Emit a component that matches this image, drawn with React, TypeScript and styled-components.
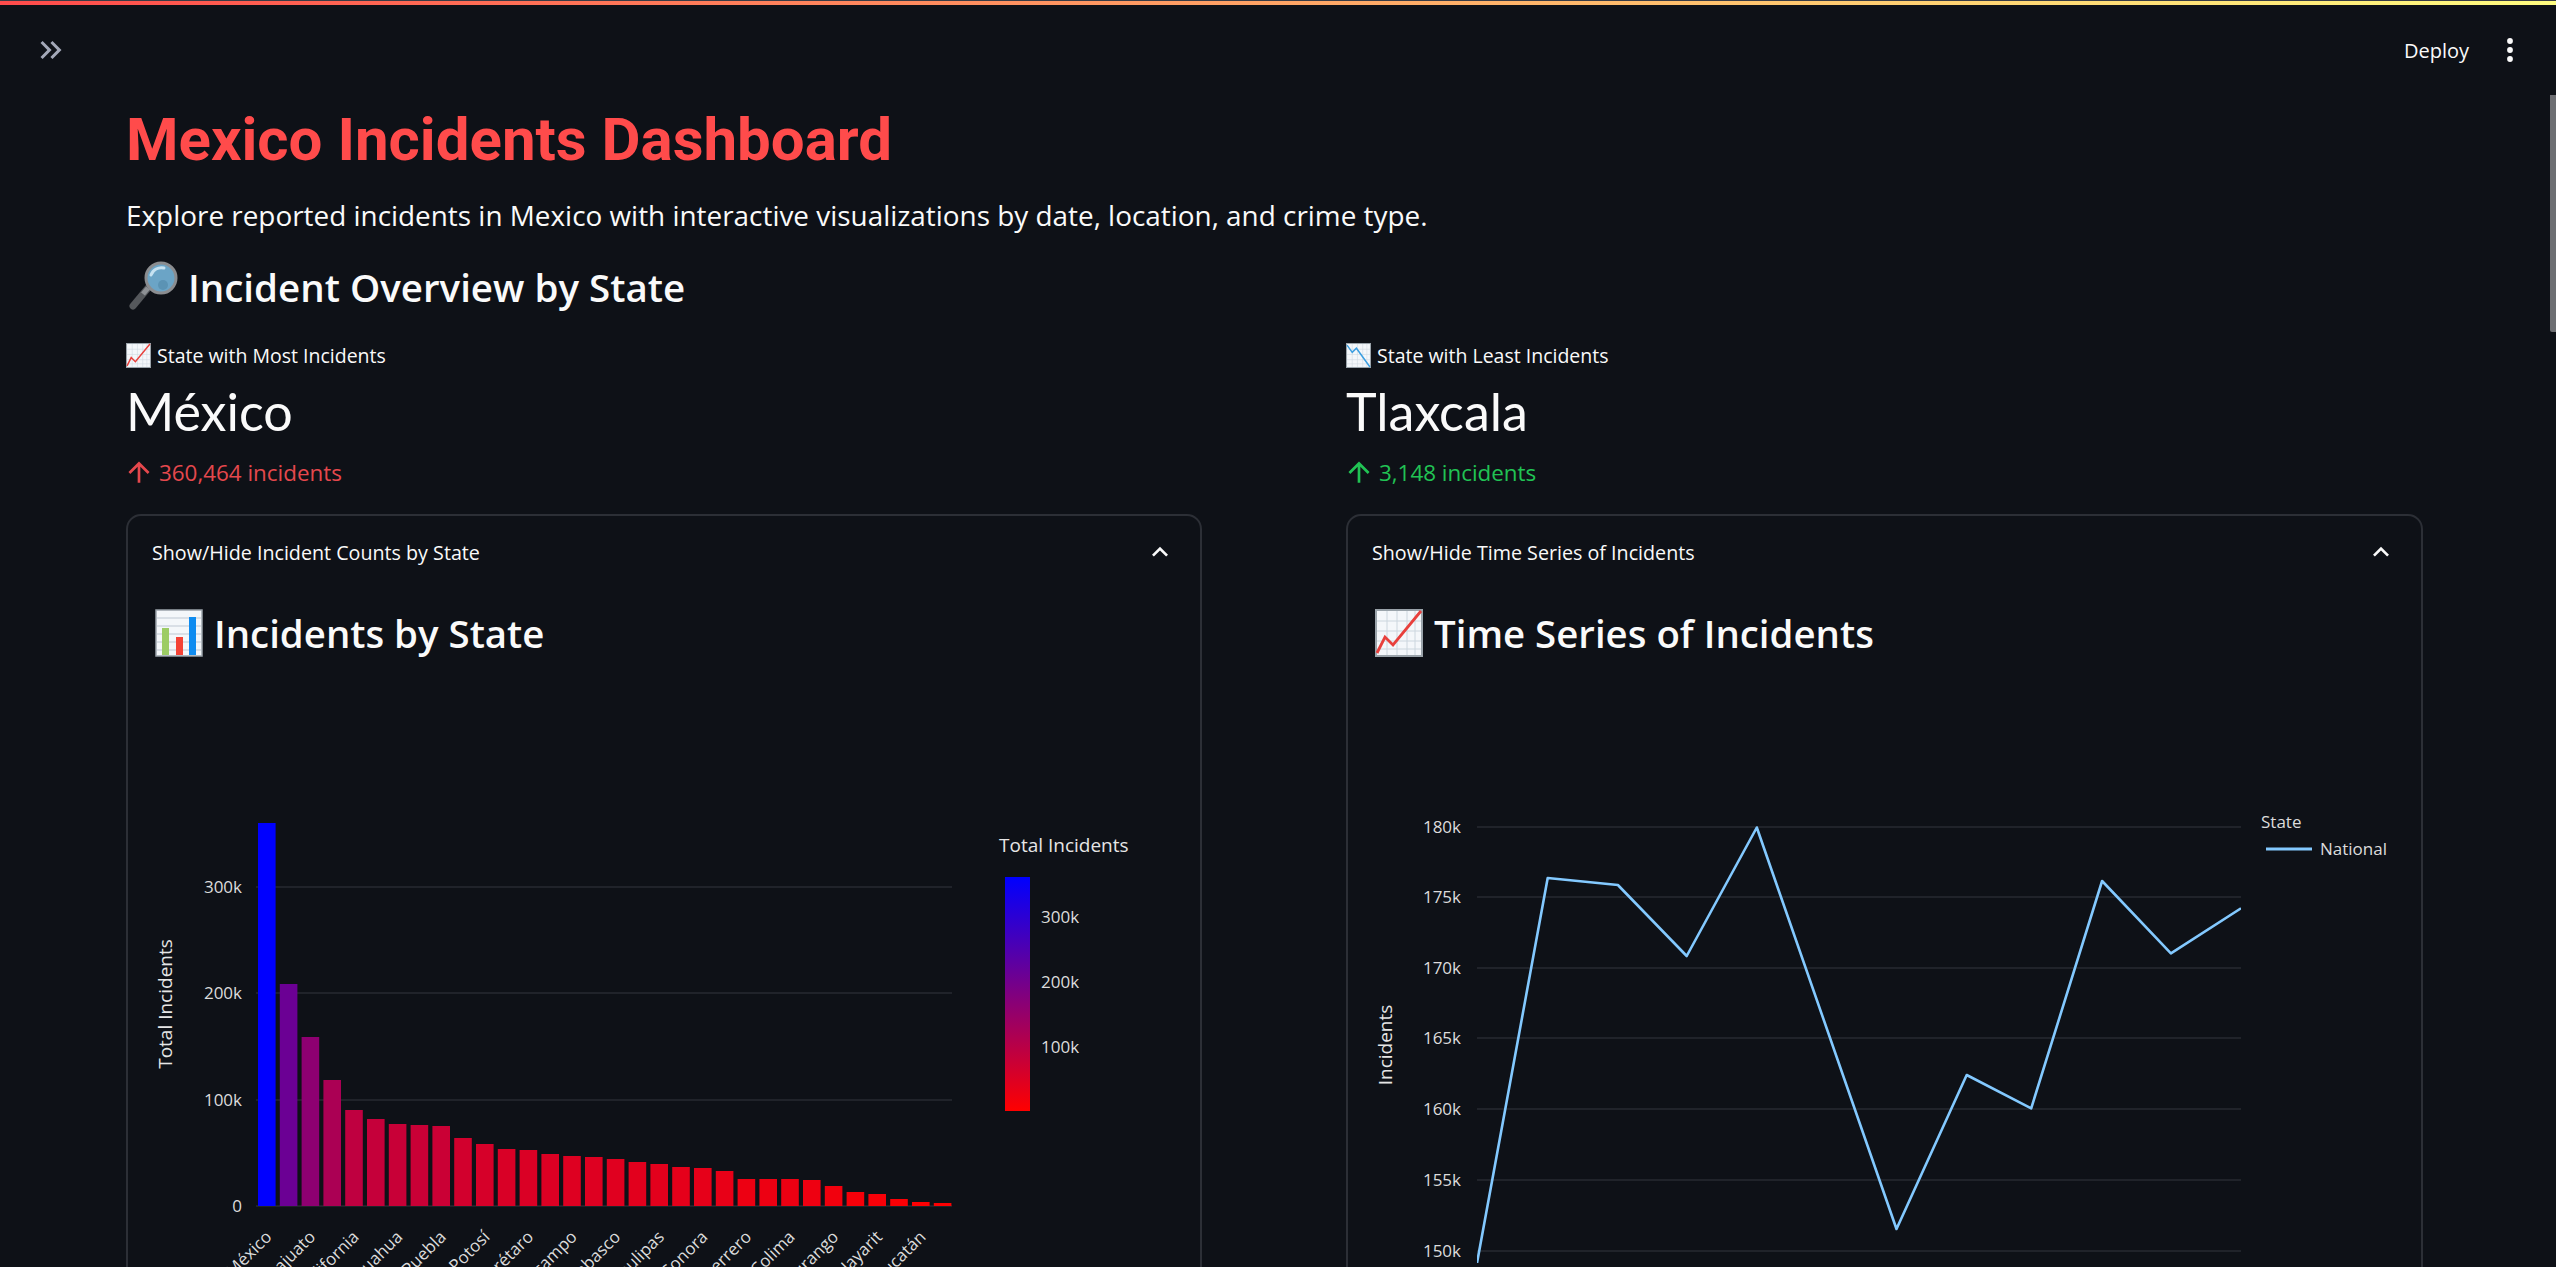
import React from 'react'
import styled, { createGlobalStyle } from 'styled-components'

const FONT = '"Open Sans", "Noto Sans", sans-serif'

const GlobalStyle = createGlobalStyle`
  html, body { margin: 0; padding: 0; background: #0e1117; }
  body { overflow: hidden; font-family: ${FONT}; color: #fafafa; }
`

// chart data, in page pixels read off the reference
const BAR_TOPS = [
  823, 984, 1037, 1080, 1110, 1119, 1124, 1125, 1126, 1138, 1144, 1149, 1150, 1154, 1156, 1157,
  1159, 1162, 1164, 1167, 1168, 1171, 1179, 1179, 1179, 1180, 1186, 1192, 1194, 1199, 1202, 1203
]
const BAR_LEFT = 258
const BAR_PITCH = 21.8
const BAR_WIDTH = 17.6
const BASELINE = 1206
const STATE_LABELS = [
  'México', 'Guanajuato', 'Baja California', 'Chihuahua', 'Puebla', 'San Luis Potosí', 'Querétaro',
  'Michoacán de Ocampo', 'Tabasco', 'Tamaulipas', 'Sonora', 'Guerrero', 'Colima', 'Durango',
  'Nayarit', 'Yucatán'
]
const BAR_GRID = [
  { y: 1100, label: '100k' },
  { y: 993, label: '200k' },
  { y: 887, label: '300k' }
]
const SCALE_TICKS = [
  { y: 917, label: '300k' },
  { y: 982, label: '200k' },
  { y: 1047, label: '100k' }
]
const LINE_GRID = [
  { y: 827, label: '180k' },
  { y: 897, label: '175k' },
  { y: 968, label: '170k' },
  { y: 1038, label: '165k' },
  { y: 1109, label: '160k' },
  { y: 1180, label: '155k' },
  { y: 1251, label: '150k' }
]
const LINE_POINTS =
  '1477,1263 1547.7,878 1617.9,885 1686.7,956 1756.8,827.5 1896.5,1229 1966.7,1075 2031.2,1108.3 2102.1,881 2170.9,953.3 2241,908.3'

const barColor = (top: number) => {
  const t = (BASELINE - top) / (BASELINE - BAR_TOPS[0])
  return `rgb(${Math.round(255 * (1 - t))},0,${Math.round(255 * t)})`
}

const MagnifierEmoji = () => (
  <EmojiSvg $size={52} viewBox="0 0 52 52">
    <path d="M22 27 L7 45" stroke="#55585c" strokeWidth="7" strokeLinecap="round" />
    <path d="M22 27 L17 33" stroke="#8d9094" strokeWidth="5" />
    <circle cx="35" cy="17" r="15" fill="#6ba4c6" stroke="#8b8d90" strokeWidth="3" />
    <path d="M25 14 A11 11 0 0 1 38 7" stroke="#c7e2f1" strokeWidth="3" fill="none" strokeLinecap="round" />
    <circle cx="37" cy="24" r="5" fill="#5b93b4" />
  </EmojiSvg>
)

const GraphPaper = () => (
  <>
    <rect x="0.5" y="0.5" width="23" height="23" fill="#f4f7fa" stroke="#9aa3aa" />
    <path
      d="M1 6H23M1 11H23M1 16H23M1 20H23M6 1V23M11 1V23M16 1V23M20 1V23"
      stroke="#ccd6de"
      strokeWidth="0.5"
    />
  </>
)

const ChartUpEmoji = ({ size }: { size: number }) => (
  <EmojiSvg $size={size} viewBox="0 0 24 24">
    <GraphPaper />
    <path d="M1 22 L5 14 L9 18 L23 1" fill="none" stroke="#e8403c" strokeWidth="1.4" />
  </EmojiSvg>
)

const ChartDownEmoji = ({ size }: { size: number }) => (
  <EmojiSvg $size={size} viewBox="0 0 24 24">
    <GraphPaper />
    <path d="M1 2 L6 9 L10 5 L23 23" fill="none" stroke="#3b9ee0" strokeWidth="1.4" />
  </EmojiSvg>
)

const BarsEmoji = ({ size }: { size: number }) => (
  <EmojiSvg $size={size} viewBox="0 0 48 48">
    <rect x="1" y="1" width="46" height="46" fill="#f4f7fa" stroke="#9aa3aa" strokeWidth="1.5" />
    <path d="M2 9H46M2 17H46M2 25H46M2 33H46M2 41H46" stroke="#cfd8df" strokeWidth="1.5" />
    <rect x="7" y="19" width="7" height="27" fill="#9ccc65" />
    <rect x="21" y="28" width="7" height="18" fill="#f44336" />
    <rect x="34" y="8" width="7" height="38" fill="#0f8cf0" />
  </EmojiSvg>
)

const ArrowUp = ({ color }: { color: string }) => (
  <DeltaArrow viewBox="0 0 24 24" fill={color}>
    <path d="M13 20h-2V8l-5.5 5.5-1.42-1.42L12 4.16l7.92 7.92-1.42 1.42L13 8z" />
  </DeltaArrow>
)

const IncidentsByState = () => (
  <ChartSvg width={1024} height={700} viewBox="152 678 1024 700">
    <defs>
      <linearGradient id="scale" x1="0" y1="0" x2="0" y2="1">
        <stop offset="0" stopColor="#0000ff" />
        <stop offset="1" stopColor="#ff0000" />
      </linearGradient>
    </defs>
    <GridLine x1={256} x2={952} y1={BASELINE} y2={BASELINE} />
    {BAR_GRID.map(g => (
      <g key={g.label}>
        <GridLine x1={256} x2={952} y1={g.y} y2={g.y} />
        <TickLabel x={242} y={g.y + 6} textAnchor="end">{g.label}</TickLabel>
      </g>
    ))}
    <TickLabel x={242} y={BASELINE + 6} textAnchor="end">0</TickLabel>
    {BAR_TOPS.map((top, i) => (
      <rect
        key={i}
        x={BAR_LEFT + i * BAR_PITCH}
        y={top}
        width={BAR_WIDTH}
        height={BASELINE - top}
        fill={barColor(top)}
      />
    ))}
    {STATE_LABELS.map((name, i) => {
      const x = BAR_LEFT + BAR_WIDTH / 2 + i * 2 * BAR_PITCH + 6
      return (
        <TickLabel key={name} x={x} y={1238} textAnchor="end" transform={`rotate(-45 ${x} 1238)`}>
          {name}
        </TickLabel>
      )
    })}
    <AxisTitle x={172} y={1004} textAnchor="middle" transform="rotate(-90 172 1004)">
      Total Incidents
    </AxisTitle>
    <AxisTitle x={999} y={852}>Total Incidents</AxisTitle>
    <rect x={1005} y={877} width={25} height={234} fill="url(#scale)" />
    {SCALE_TICKS.map(t => (
      <TickLabel key={t.label} x={1041} y={t.y + 6}>{t.label}</TickLabel>
    ))}
  </ChartSvg>
)

const IncidentsOverTime = () => (
  <ChartSvg width={1025} height={700} viewBox="1372 678 1025 700">
    <defs>
      <clipPath id="plot">
        <rect x={1477} y={800} width={764} height={463} />
      </clipPath>
    </defs>
    {LINE_GRID.map(g => (
      <g key={g.label}>
        <GridLine x1={1477} x2={2241} y1={g.y} y2={g.y} />
        <TickLabel x={1461} y={g.y + 6} textAnchor="end">{g.label}</TickLabel>
      </g>
    ))}
    <AxisTitle x={1392} y={1045} textAnchor="middle" transform="rotate(-90 1392 1045)">
      Incidents
    </AxisTitle>
    <polyline
      points={LINE_POINTS}
      fill="none"
      stroke="#83c9ff"
      strokeWidth="2.6"
      strokeLinejoin="round"
      clipPath="url(#plot)"
    />
    <TickLabel x={2261} y={828}>State</TickLabel>
    <line x1={2266} x2={2312} y1={849} y2={849} stroke="#83c9ff" strokeWidth="3" />
    <TickLabel x={2320} y={855}>National</TickLabel>
  </ChartSvg>
)

export default function App() {
  return (
    <Shell>
      <GlobalStyle />
      <TopStripe />
      <Toolbar>
        <svg width="36" height="36" viewBox="0 0 24 24" fill="#a3a8b8">
          <path d="M6.41 6 5 7.41 9.58 12 5 16.59 6.41 18l6-6z" />
          <path d="M13 6l-1.41 1.41L16.17 12l-4.58 4.59L13 18l6-6z" />
        </svg>
        <ToolbarActions>
          <DeployLabel>Deploy</DeployLabel>
          <svg width="24" height="36" viewBox="0 0 24 36" fill="#fafafa">
            <circle cx="12" cy="9" r="2.9" />
            <circle cx="12" cy="18" r="2.9" />
            <circle cx="12" cy="27" r="2.9" />
          </svg>
        </ToolbarActions>
      </Toolbar>
      <Main>
        <Title>Mexico Incidents Dashboard</Title>
        <Subtitle>Explore reported incidents in Mexico with interactive visualizations by date, location, and crime type.</Subtitle>
        <SectionHeading>
          <MagnifierEmoji />
          Incident Overview by State
        </SectionHeading>
        <Columns>
          <Column>
            <MetricLabel>
              <ChartUpEmoji size={25} />
              State with Most Incidents
            </MetricLabel>
            <MetricValue>México</MetricValue>
            <MetricDelta $color="#e5484d">
              <ArrowUp color="#e5484d" />
              360,464 incidents
            </MetricDelta>
            <Panel>
              <PanelHeader>
                Show/Hide Incident Counts by State
                <Chevron />
              </PanelHeader>
              <PanelHeading>
                <BarsEmoji size={48} />
                Incidents by State
              </PanelHeading>
              <IncidentsByState />
            </Panel>
          </Column>
          <Column>
            <MetricLabel>
              <ChartDownEmoji size={25} />
              State with Least Incidents
            </MetricLabel>
            <MetricValue>Tlaxcala</MetricValue>
            <MetricDelta $color="#21c354">
              <ArrowUp color="#21c354" />
              3,148 incidents
            </MetricDelta>
            <Panel>
              <PanelHeader>
                Show/Hide Time Series of Incidents
                <Chevron />
              </PanelHeader>
              <PanelHeading>
                <ChartUpEmoji size={48} />
                Time Series of Incidents
              </PanelHeading>
              <IncidentsOverTime />
            </Panel>
          </Column>
        </Columns>
      </Main>
      <ScrollThumb />
    </Shell>
  )
}

const Chevron = () => (
  <svg width="32" height="32" viewBox="0 0 24 24" fill="#fafafa">
    <path d="M12 8l-6 6 1.41 1.41L12 10.83l4.59 4.58L18 14z" />
  </svg>
)

const Shell = styled.div`
  position: relative;
  height: 100vh;
  overflow: hidden;
  background: #0e1117;
`

const TopStripe = styled.div`
  height: 4px;
  border-top: 1px solid #3a3d46;
  background: linear-gradient(90deg, #ff4b4b, #fffd80);
`

const Toolbar = styled.header`
  display: flex;
  justify-content: space-between;
  align-items: center;
  height: 90px;
  padding: 0 34px 0 33px;
`

const ToolbarActions = styled.div`
  display: flex;
  align-items: center;
  gap: 29px;
`

const DeployLabel = styled.span`
  font-size: 20px;
`

const Main = styled.main`
  padding: 0 133px 0 126px;
`

const Title = styled.h1`
  margin: 0;
  height: 90px;
  line-height: 90px;
  font-family: Roboto, sans-serif;
  font-size: 60px;
  font-weight: 700;
  color: #ff4b4b;
  white-space: nowrap;
`

const Subtitle = styled.p`
  margin: 0;
  height: 60px;
  line-height: 60px;
  font-size: 27.9px;
`

const SectionHeading = styled.h2`
  display: flex;
  align-items: center;
  gap: 10px;
  margin: 0;
  height: 84px;
  font-size: 38.5px;
  font-weight: 600;
`

const Columns = styled.div`
  display: grid;
  grid-template-columns: 1076px 1077px;
  column-gap: 144px;
  margin-top: 12px;
`

const Column = styled.section`
  display: flex;
  flex-direction: column;
`

const MetricLabel = styled.div`
  display: flex;
  align-items: center;
  gap: 6px;
  height: 28px;
  font-size: 19.5px;
`

const MetricValue = styled.div`
  height: 70px;
  margin-top: 7px;
  line-height: 70px;
  font-family: Lato, sans-serif;
  font-size: 52px;
`

const MetricDelta = styled.div<{ $color: string }>`
  display: flex;
  align-items: center;
  gap: 4px;
  height: 32px;
  margin-top: 10px;
  font-size: 22.4px;
  color: ${p => p.$color};
`

const DeltaArrow = styled.svg`
  flex: none;
  width: 32px;
  height: 32px;
  margin-left: -3px;
`

const Panel = styled.div`
  box-sizing: border-box;
  height: 900px;
  margin-top: 26px;
  padding: 0 24px;
  border: 2px solid #2c2f36;
  border-radius: 15px;
`

const PanelHeader = styled.div`
  display: flex;
  justify-content: space-between;
  align-items: center;
  height: 72px;
  font-size: 19.7px;
`

const PanelHeading = styled.h3`
  display: flex;
  align-items: center;
  gap: 11px;
  margin: 0;
  height: 90px;
  padding-left: 3px;
  font-size: 38.4px;
  font-weight: 600;
`

const EmojiSvg = styled.svg<{ $size: number }>`
  flex: none;
  width: ${p => p.$size}px;
  height: ${p => p.$size}px;
`

const ChartSvg = styled.svg`
  display: block;
`

const GridLine = styled.line`
  stroke: #33363e;
  stroke-width: 1.2;
`

const TickLabel = styled.text`
  font-family: ${FONT};
  font-size: 17px;
  fill: #dcdcdc;
`

const AxisTitle = styled.text`
  font-family: ${FONT};
  font-size: 19px;
  fill: #e6e6e6;
`

const ScrollThumb = styled.div`
  position: absolute;
  top: 95px;
  right: 0;
  width: 6px;
  height: 237px;
  border-radius: 0 0 0 2px;
  background: #6d6e72;
`
